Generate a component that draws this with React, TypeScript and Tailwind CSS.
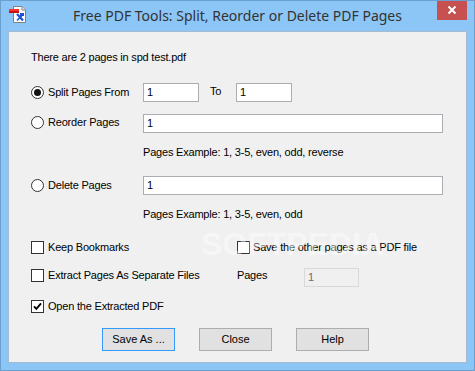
import React from 'react';

const Radio = ({ checked }: { checked?: boolean }) => (
  <span className="w-[13px] h-[13px] rounded-full border border-[#333] bg-white flex items-center justify-center shrink-0">
    {checked && <span className="w-[7px] h-[7px] rounded-full bg-[#111]" />}
  </span>
);

const Check = ({ checked }: { checked?: boolean }) => (
  <span className="w-[13px] h-[13px] border border-[#333] bg-white flex items-center justify-center shrink-0">
    {checked && (
      <svg width="9" height="9" viewBox="0 0 9 9">
        <path d="M1 4.3 L3.4 6.8 L8 1.4" stroke="#000" strokeWidth="1.9" fill="none" />
      </svg>
    )}
  </span>
);

const Field = ({ w, value, disabled }: { w: string; value: string; disabled?: boolean }) => (
  <div
    className={`${w} h-[19px] border flex items-center pl-[3px] ${
      disabled ? 'bg-[#f0f0f0] border-[#d9d9d9] text-[#6d6d6d]' : 'bg-white border-[#abadb3]'
    }`}
  >
    {value}
  </div>
);

const Button = ({ label, focused }: { label: string; focused?: boolean }) => (
  <button
    className={`w-[73px] h-[23px] bg-[#e1e1e1] border ${
      focused ? 'border-[#3399ff]' : 'border-[#adadad]'
    } flex items-center justify-center`}
  >
    {label}
  </button>
);

const AppIcon = () => (
  <svg width="18" height="17" viewBox="0 0 18 17">
    <path d="M4.5 0.5 H13 L16.5 4 V16.5 H4.5 Z" fill="#fff" stroke="#808080" />
    <path d="M13 0.5 V4 H16.5" fill="#e6e6e6" stroke="#808080" />
    <rect x="0" y="3" width="10" height="2" fill="#ff3030" />
    <rect x="0" y="5" width="10" height="2" fill="#c81010" />
    <path d="M8 8 L14 14.5" stroke="#1e50d8" strokeWidth="2.2" />
    <path d="M14 8.5 L8 14.5" stroke="#1e50d8" strokeWidth="1.6" />
    <rect x="11" y="7" width="4" height="3" fill="#1e50d8" />
  </svg>
);

export default function App() {
  return (
    <div className="w-[475px] h-[371px] bg-[#8cc6f6] border border-[#6a9fd0] flex flex-col overflow-hidden font-['Liberation_Sans',Arial,sans-serif] text-[11px] tracking-[-0.2px] text-black">
      {/* title bar */}
      <div className="h-[30px] grid grid-cols-[1fr_auto_1fr] items-start">
        <div className="justify-self-start pl-[8px] pt-[5px]">
          <AppIcon />
        </div>
        <div className="pt-[5px] font-['Noto_Sans',sans-serif] text-[14px] tracking-normal text-[#333] leading-[20px]">
          Free PDF Tools: Split, Reorder or Delete PDF Pages
        </div>
        <div className="justify-self-end mr-[7px] -mt-px w-[30px] h-[20px] bg-[#c75050] flex items-center justify-center">
          <svg width="10" height="10" viewBox="0 0 10 10">
            <path d="M1.5 1.5 L8.5 8.5 M8.5 1.5 L1.5 8.5" stroke="#fff" strokeWidth="2" />
          </svg>
        </div>
      </div>

      {/* client area */}
      <div className="relative mx-[7px] h-[332px] bg-[#f0f0f0] border border-[#a7bbd0] flex flex-col pl-[22px] pt-[19px] leading-[13px]">
        <div className="h-[13px]">There are 2 pages in spd test.pdf</div>

        <div className="mt-[19px] h-[19px] flex items-center">
          <div className="w-[112px] flex items-center gap-[4px]">
            <Radio checked />
            <span>Split Pages From</span>
          </div>
          <Field w="w-[56px]" value="1" />
          <span className="w-[37px] pl-[11px] -mt-[3px]">To</span>
          <Field w="w-[56px]" value="1" />
        </div>

        <div className="mt-[12px] h-[19px] flex items-center">
          <div className="w-[112px] flex items-center gap-[4px] -mt-[3px]">
            <Radio />
            <span>Reorder Pages</span>
          </div>
          <Field w="w-[300px]" value="1" />
        </div>

        <div className="mt-[13px] h-[13px] pl-[112px]">Pages Example: 1, 3-5, even, odd, reverse</div>

        <div className="mt-[17px] h-[19px] flex items-center">
          <div className="w-[112px] flex items-center gap-[4px] -mt-[1px]">
            <Radio />
            <span>Delete Pages</span>
          </div>
          <Field w="w-[300px]" value="1" />
        </div>

        <div className="mt-[13px] h-[13px] pl-[112px]">Pages Example: 1, 3-5, even, odd</div>

        <div className="mt-[20px] h-[13px] flex items-center">
          <div className="w-[206px] flex items-center gap-[4px]">
            <Check />
            <span>Keep Bookmarks</span>
          </div>
          <div className="flex items-center gap-[3px] -mt-[1px]">
            <Check />
            <span>Save the other pages as a PDF file</span>
          </div>
        </div>

        <div className="mt-[14px] h-[19px] flex items-start">
          <div className="w-[206px] h-[15px] flex items-center gap-[4px]">
            <Check />
            <span>Extract Pages As Separate Files</span>
          </div>
          <div className="w-[67px] h-[15px] flex items-center">Pages</div>
          <Field w="w-[55px]" value="1" disabled />
        </div>

        <div className="mt-[13px] h-[13px] flex items-center gap-[4px]">
          <Check checked />
          <span>Open the Extracted PDF</span>
        </div>

        <div className="mt-[15px] h-[23px] flex items-center gap-[24px] pl-[71px] tracking-normal">
          <Button label="Save As ..." focused />
          <Button label="Close" />
          <Button label="Help" />
        </div>

        {/* faint watermark */}
        <div className="absolute left-[192px] top-[196px] font-['Liberation_Sans',sans-serif] font-bold text-[32px] leading-[32px] tracking-[0px] text-white/45 pointer-events-none select-none">
          SOFTPEDIA<span className="text-[8px] align-top">®</span>
        </div>
      </div>
    </div>
  );
}
